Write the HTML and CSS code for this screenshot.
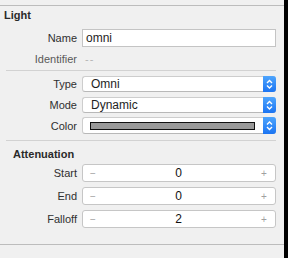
FILE: index.html
```html
<!DOCTYPE html>
<html>
<head>
<meta charset="utf-8">
<link rel="stylesheet" href="styles.css">
</head>
<body>
<div class="panel">
  <div class="rule-top"></div>
  <div class="title">Light</div>
  <div class="row row-name">
    <div class="label">Name</div>
    <div class="field">omni</div>
  </div>
  <div class="row row-ident">
    <div class="label label-dim">Identifier</div>
    <div class="ident-value">--</div>
  </div>
  <div class="sep sep-1"></div>
  <div class="row row-type">
    <div class="label">Type</div>
    <div class="popup"><span class="popup-text">Omni</span><span class="popup-btn"><svg width="13" height="16" viewBox="0 0 13 16"><path d="M4 7 L6.5 4.5 L9 7" fill="none" stroke="#fff" stroke-width="1.4"/><path d="M4 9.5 L6.5 12 L9 9.5" fill="none" stroke="#fff" stroke-width="1.4"/></svg></span></div>
  </div>
  <div class="row row-mode">
    <div class="label">Mode</div>
    <div class="popup"><span class="popup-text">Dynamic</span><span class="popup-btn"><svg width="13" height="16" viewBox="0 0 13 16"><path d="M4 7 L6.5 4.5 L9 7" fill="none" stroke="#fff" stroke-width="1.4"/><path d="M4 9.5 L6.5 12 L9 9.5" fill="none" stroke="#fff" stroke-width="1.4"/></svg></span></div>
  </div>
  <div class="row row-color">
    <div class="label">Color</div>
    <div class="popup popup-color"><span class="swatch-wrap"><span class="swatch"></span></span><span class="popup-btn"><svg width="13" height="17" viewBox="0 0 13 17"><path d="M4 7.5 L6.5 5 L9 7.5" fill="none" stroke="#fff" stroke-width="1.4"/><path d="M4 10 L6.5 12.5 L9 10" fill="none" stroke="#fff" stroke-width="1.4"/></svg></span></div>
  </div>
  <div class="sep sep-2"></div>
  <div class="title title-sub">Attenuation</div>
  <div class="row row-start">
    <div class="label">Start</div>
    <div class="stepper"><span class="step-minus">−</span><span class="step-val">0</span><span class="step-plus">+</span></div>
  </div>
  <div class="row row-end">
    <div class="label">End</div>
    <div class="stepper"><span class="step-minus">−</span><span class="step-val">0</span><span class="step-plus">+</span></div>
  </div>
  <div class="row row-falloff">
    <div class="label">Falloff</div>
    <div class="stepper"><span class="step-minus">−</span><span class="step-val">2</span><span class="step-plus">+</span></div>
  </div>
  <div class="rule-bottom"></div>
</div>
<div class="strip"></div>
</body>
</html>
```

FILE: styles.css
```css
html, body {
  margin: 0;
  padding: 0;
  height: 100%;
}
body {
  display: flex;
  width: 288px;
  height: 258px;
  overflow: hidden;
  font-family: "Liberation Sans", Arial, sans-serif;
  font-size: 11px;
  color: #2e2e2e;
  background: #f0f0f0;
}
.panel {
  flex: 0 0 284px;
  display: flex;
  flex-direction: column;
  padding-top: 5px;
  background: #f0f0f0;
}
.strip {
  flex: 1;
  background: #000;
}
.rule-top {
  height: 0;
  border-top: 1px solid #bcbcbc;
}
.title {
  margin-top: 3px;
  height: 13px;
  line-height: 13px;
  padding-left: 4px;
  font-weight: bold;
  color: #2a2a2a;
}
.title-sub {
  margin-top: 7px;
  padding-left: 13px;
}
.row {
  display: flex;
  align-items: center;
}
.label {
  flex: 0 0 77px;
  text-align: right;
  padding-right: 5px;
  box-sizing: content-box;
  color: #2f2f2f;
}
.label-dim {
  color: #595959;
}
.row-name { margin-top: 7px; height: 18px; }
.row-ident { margin-top: 3px; height: 18px; }
.row-type { margin-top: 5px; height: 16px; }
.row-mode { margin-top: 5px; height: 16px; }
.row-color { margin-top: 4px; height: 17px; }
.row-start { margin-top: 3px; height: 18px; }
.row-end { margin-top: 5px; height: 18px; }
.row-falloff { margin-top: 5px; height: 18px; }

.field {
  width: 194px;
  height: 18px;
  box-sizing: border-box;
  border: 1px solid #c4c4c4;
  background: #fff;
  padding-left: 3px;
  line-height: 16px;
  font-size: 12px;
  color: #1e1e1e;
}
.ident-value {
  padding-left: 3px;
  color: #b5b5b5;
  letter-spacing: 1px;
}
.sep {
  height: 0;
  border-top: 1px solid #d2d2d2;
  margin-left: 6px;
  width: 270px;
}
.sep-1 { margin-top: 2px; }
.sep-2 { margin-top: 6px; }

.popup {
  width: 194px;
  height: 100%;
  box-sizing: border-box;
  display: flex;
  align-items: stretch;
  background: #fff;
  border: 1px solid #cdcdcd;
  border-bottom-color: #b8b8b8;
  border-right: none;
  border-radius: 3px;
}
.popup-text {
  flex: 1;
  padding-left: 8px;
  font-size: 12px;
  line-height: 14px;
  color: #1e1e1e;
}
.popup-btn {
  flex: 0 0 13px;
  margin: -1px 0;
  border-radius: 0 3px 3px 0;
  background: linear-gradient(#4ea5fd, #1b74f2);
  display: flex;
  align-items: center;
  justify-content: center;
}
.popup-btn svg {
  display: block;
}
.popup-color .swatch-wrap {
  flex: 1;
  display: flex;
  align-items: center;
  padding-left: 7px;
  padding-right: 8px;
}
.swatch {
  flex: 1;
  height: 8px;
  box-sizing: border-box;
  border: 1px solid #111;
  background: #9a9a9a;
}

.stepper {
  width: 194px;
  height: 100%;
  box-sizing: border-box;
  display: flex;
  align-items: center;
  background: #fff;
  border: 1px solid #c6c6c6;
  border-radius: 3px;
  padding: 0 7px 0 6px;
}
.step-minus, .step-plus {
  flex: 0 0 8px;
  color: #a0a0a0;
  font-size: 10px;
  text-align: center;
}
.step-val {
  flex: 1;
  text-align: center;
  font-size: 12px;
  color: #111;
}
.rule-bottom {
  margin-top: 16px;
  height: 0;
  border-top: 1px solid #bcbcbc;
}
```
